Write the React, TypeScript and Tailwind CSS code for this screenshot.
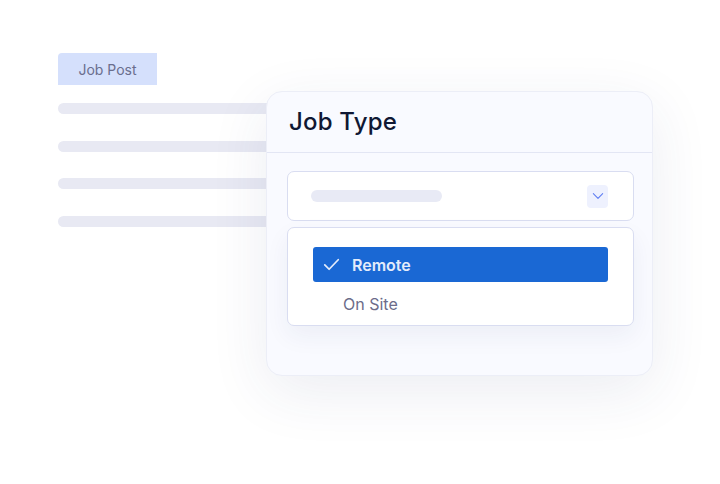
import React from 'react';

const font = { fontFamily: 'Inter, "Noto Sans", sans-serif' };

const CheckIcon = () => (
  <svg width="19" height="19" viewBox="0 0 24 24" fill="none" stroke="currentColor" strokeWidth="2.2" strokeLinecap="round" strokeLinejoin="round">
    <path d="M3.5 12.5l5.5 5.5L20.5 6" />
  </svg>
);

const ChevronDown = () => (
  <svg width="14" height="14" viewBox="0 0 24 24" fill="none" stroke="currentColor" strokeWidth="1.8" strokeLinecap="round" strokeLinejoin="round">
    <path d="M4 8l8 8 8-8" />
  </svg>
);

const JobTypeCard: React.FC = () => (
  <div className="absolute left-[266px] top-[91px] w-[387px] h-[285px] rounded-[16px] border border-[#eceef7] bg-[#f9faff] shadow-[0_16px_60px_rgba(40,50,110,0.09)]">
    <div className="h-[61px] flex items-center pl-[22px] border-b border-[#e3e6f4]">
      <h2 className="text-[24px] font-medium text-[#101833] tracking-[0.2px]">Job Type</h2>
    </div>
    <div className="pl-[20px] pr-[18px] pt-[18px]">
      <div className="h-[50px] rounded-[7px] border border-[#d9ddf1] bg-white flex items-center justify-between pl-[23px] pr-[25px]">
        <div className="w-[131px] h-[12px] rounded-full bg-[#e8eaf5]" />
        <div className="w-[21px] h-[23px] rounded-[4px] bg-[#eef1fe] text-[#5d7cf2] flex items-center justify-center">
          <ChevronDown />
        </div>
      </div>
      <div className="mt-[6px] h-[99px] rounded-[7px] border border-[#d9ddf1] bg-white px-[25px] pt-[19px] shadow-[0_10px_24px_rgba(40,50,110,0.06)]">
        <div className="h-[35px] rounded-[3px] bg-[#1a68d4] flex items-center pl-[9px] text-[#e4ecfb]">
          <CheckIcon />
          <span className="ml-[11px] text-[16px] font-semibold">Remote</span>
        </div>
        <div className="h-[43px] flex items-center pl-[30px] text-[16px] text-[#6c6c8a]">On Site</div>
      </div>
    </div>
  </div>
);

export default function App() {
  return (
    <div className="relative w-[720px] h-[484px] bg-white overflow-hidden" style={font}>
      <div className="pl-[58px] pt-[53px] flex flex-col">
        <div className="w-[99px] h-[32px] rounded-tl-[4px] bg-[#d5e0fc] text-[14px] text-[#6a6e8e] flex items-center justify-center">
          Job Post
        </div>
        <div className="mt-[18px] flex flex-col gap-[26.5px]">
          <div className="w-[260px] h-[11px] rounded-full bg-[#e8e9f3]" />
          <div className="w-[260px] h-[11px] rounded-full bg-[#e8e9f3]" />
          <div className="w-[260px] h-[11px] rounded-full bg-[#e8e9f3]" />
          <div className="w-[260px] h-[11px] rounded-full bg-[#e8e9f3]" />
        </div>
      </div>
      <JobTypeCard />
    </div>
  );
}
